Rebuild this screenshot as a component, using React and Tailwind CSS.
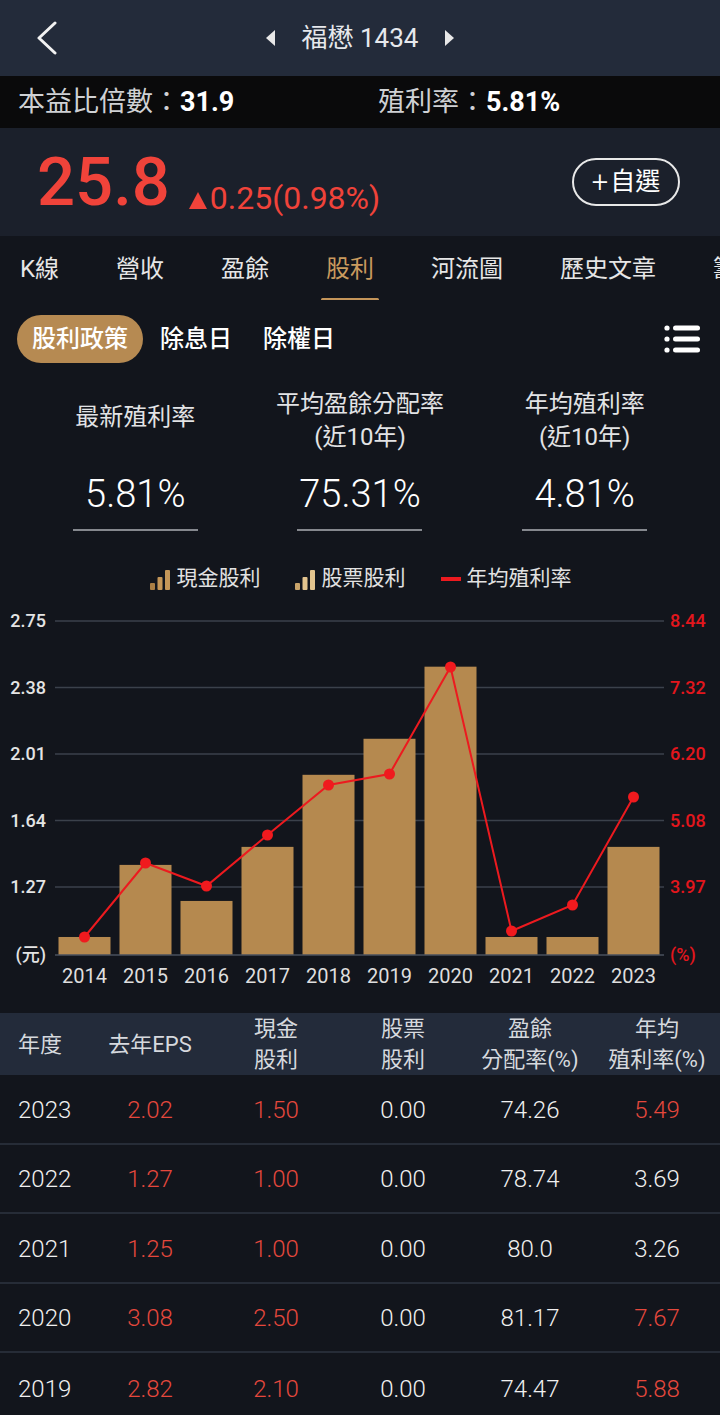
import React from 'react';

const FONT = { fontFamily: 'Roboto, "Noto Sans CJK TC", sans-serif' };

const tabs = ['K線', '營收', '盈餘', '股利', '河流圖', '歷史文章', '籌碼分析'];

const stats = [
  { label: ['最新殖利率'], value: '5.81%' },
  { label: ['平均盈餘分配率', '(近10年)'], value: '75.31%' },
  { label: ['年均殖利率', '(近10年)'], value: '4.81%' },
];

// chart data (pixel y is relative to the svg top)
const years = [2014, 2015, 2016, 2017, 2018, 2019, 2020, 2021, 2022, 2023];
const cash = [1.0, 1.4, 1.2, 1.5, 1.9, 2.1, 2.5, 1.0, 1.0, 1.5];
const lineY = [343, 269, 292, 241, 191, 180, 73, 337, 311, 203];
const grid = [
  { y: 27, l: '2.75', r: '8.44' },
  { y: 93.5, l: '2.38', r: '7.32' },
  { y: 160, l: '2.01', r: '6.20' },
  { y: 226.5, l: '1.64', r: '5.08' },
  { y: 293, l: '1.27', r: '3.97' },
];

const rows = [
  ['2023', '2.02', '1.50', '0.00', '74.26', '5.49', true],
  ['2022', '1.27', '1.00', '0.00', '78.74', '3.69', false],
  ['2021', '1.25', '1.00', '0.00', '80.0', '3.26', false],
  ['2020', '3.08', '2.50', '0.00', '81.17', '7.67', true],
  ['2019', '2.82', '2.10', '0.00', '74.47', '5.88', true],
];

const COLS = 'grid-cols-[96px_108px_144px_110px_144px_110px]';

function BarsIcon({ light }) {
  const c1 = light ? '#c9a46a' : '#a97e45';
  const c2 = light ? '#e3c48e' : '#c49658';
  return (
    <svg width="22" height="22" viewBox="0 0 22 22">
      <rect x="1" y="15" width="5" height="7" rx="1" fill={c1} />
      <rect x="8.5" y="9" width="5" height="13" rx="1" fill={c2} />
      <rect x="16" y="2" width="5" height="20" rx="1" fill={c2} />
    </svg>
  );
}

function Chart() {
  const base = 361;
  const barY = (v) => base - (v - 0.9) * 180.2;
  const cx = (i) => 84.5 + 61 * i;
  return (
    <svg width="720" height="419" viewBox="0 0 720 419" className="block">
      {grid.map((g) => (
        <g key={g.l}>
          <line x1="55" x2="664" y1={g.y} y2={g.y} stroke="#3b414b" strokeWidth="1.5" />
          <text x="46" y={g.y + 6} textAnchor="end" fontSize="18" fontWeight="500" fill="#e4e4e4" style={FONT}>{g.l}</text>
          <text x="670" y={g.y + 6} fontSize="18" fontWeight="500" fill="#e3161c" style={FONT}>{g.r}</text>
        </g>
      ))}
      {cash.map((v, i) => (
        <rect key={i} x={cx(i) - 26} y={barY(v)} width="52" height={base - barY(v)} fill="#b5894f" />
      ))}
      <line x1="55" x2="664" y1={base} y2={base} stroke="#4a505c" strokeWidth="1.5" />
      <text x="46" y={base + 6} textAnchor="end" fontSize="18" fontWeight="500" fill="#e4e4e4" style={FONT}>(元)</text>
      <text x="670" y={base + 6} fontSize="18" fontWeight="500" fill="#e3161c" style={FONT}>(%)</text>
      <polyline
        points={lineY.map((y, i) => `${cx(i)},${y}`).join(' ')}
        fill="none"
        stroke="#ec1a1f"
        strokeWidth="2"
      />
      {lineY.map((y, i) => (
        <circle key={i} cx={cx(i)} cy={y} r="5.5" fill="#f01a1e" />
      ))}
      {years.map((yr, i) => (
        <text key={yr} x={cx(i)} y="389" textAnchor="middle" fontSize="20" fill="#dedede" style={FONT}>{yr}</text>
      ))}
    </svg>
  );
}

export default function App() {
  return (
    <div className="w-[720px] min-h-[1415px] bg-[#12151c] text-[#e8e8e8] overflow-hidden" style={FONT}>
      {/* Header */}
      <div className="relative h-[76px] bg-[#232b3a] flex items-center justify-center">
        <svg className="absolute left-[34px] top-[21px]" width="26" height="34" viewBox="0 0 26 34">
          <path d="M21 2 L5 17 L21 32" fill="none" stroke="#f2f2f2" strokeWidth="3" strokeLinecap="round" strokeLinejoin="round" />
        </svg>
        <div className="flex items-center gap-[26px]">
          <svg width="12" height="18" viewBox="0 0 12 18"><path d="M11 1 L2 9 L11 17 Z" fill="#e8e8e8" /></svg>
          <span className="text-[26px] text-[#e6e8ec]">福懋 1434</span>
          <svg width="12" height="18" viewBox="0 0 12 18"><path d="M1 1 L10 9 L1 17 Z" fill="#e8e8e8" /></svg>
        </div>
      </div>

      {/* PE / yield bar */}
      <div className="h-[52px] bg-[#0a0a0b] flex items-center pl-[18px] text-[27px]">
        <div className="w-[360px] text-[#cfd1d4]">
          本益比倍數：<span className="text-white font-bold">31.9</span>
        </div>
        <div className="text-[#cfd1d4]">
          殖利率：<span className="text-white font-bold">5.81%</span>
        </div>
      </div>

      {/* Price */}
      <div className="h-[108px] bg-[#1b202b] flex items-center justify-between pl-[37px] pr-[40px]">
        <div className="flex items-end text-[#f0433a]">
          <span className="text-[67px] leading-none font-medium">25.8</span>
          <span className="text-[32px] leading-none ml-[18px] mb-[2px] flex items-end">
            <svg width="20" height="20" viewBox="0 0 20 20" className="mb-[4px] mr-[2px]"><path d="M10 2 L19 19 L1 19 Z" fill="#f0433a" /></svg>
            0.25(0.98%)
          </span>
        </div>
        <div className="w-[108px] h-[48px] rounded-full border-2 border-[#e8e8e8] flex items-center justify-center text-[25px] text-white">
          <span className="text-[29px] font-light mr-[2px] leading-none">+</span>自選
        </div>
      </div>

      {/* Tabs */}
      <div className="h-[64px] flex items-stretch gap-[57px] pl-[20px] whitespace-nowrap overflow-hidden text-[24px]">
        {tabs.map((t) => (
          <div key={t} className={`relative flex items-center pt-[2px] ${t === '股利' ? 'text-[#c99a5e]' : 'text-[#e6e6e6]'}`}>
            {t}
            {t === '股利' && <div className="absolute left-[-5px] right-[-5px] bottom-[-1px] h-[3px] bg-[#c4955a] rounded-full" />}
          </div>
        ))}
      </div>

      {/* Sub tabs */}
      <div className="mt-[15px] h-[48px] flex items-center pl-[17px] pr-[20px] text-[24px]">
        <div className="h-[48px] px-[15px] rounded-full bg-[#b68a52] flex items-center text-white font-medium">股利政策</div>
        <div className="ml-[17px] text-white font-medium">除息日</div>
        <div className="ml-[31px] text-white font-medium">除權日</div>
        <svg className="ml-auto" width="36" height="28" viewBox="0 0 36 28">
          <circle cx="3" cy="3" r="2.6" fill="#fff" />
          <circle cx="3" cy="14" r="2.6" fill="#fff" />
          <circle cx="3" cy="25" r="2.6" fill="#fff" />
          <rect x="9" y="0.5" width="27" height="5" rx="2.5" fill="#fff" />
          <rect x="9" y="11.5" width="27" height="5" rx="2.5" fill="#fff" />
          <rect x="9" y="22.5" width="27" height="5" rx="2.5" fill="#fff" />
        </svg>
      </div>

      {/* Summary stats */}
      <div className="mt-[25px] grid grid-cols-3 px-[23px]">
        {stats.map((s) => (
          <div key={s.value} className="flex flex-col items-center">
            <div className={`h-[66px] flex flex-col items-center justify-center text-[24px] leading-[33px] text-[#e2e3e5] ${s.label.length === 1 ? 'pb-[8px]' : ''}`}>
              {s.label.map((l) => <div key={l}>{l}</div>)}
            </div>
            <div className="mt-[17px] h-[46px] flex items-center text-[38px] font-light text-white">{s.value}</div>
            <div className="mt-[12px] w-[125px] h-[2px] bg-[#85888e]" />
          </div>
        ))}
      </div>

      {/* Legend */}
      <div className="mt-[33px] h-[30px] flex items-center justify-center text-[21px] text-[#e2e2e2]">
        <BarsIcon />
        <span className="ml-[6px]">現金股利</span>
        <span className="ml-[33px]"><BarsIcon light /></span>
        <span className="ml-[6px]">股票股利</span>
        <span className="ml-[35px] w-[20px] h-[4px] bg-[#ec1a1f]" />
        <span className="ml-[6px]">年均殖利率</span>
      </div>

      <Chart />

      {/* Table */}
      <div className={`h-[62px] bg-[#232b3a] grid ${COLS} items-center text-[22px] leading-[31px] text-[#d6d9de]`}>
        <div className="pl-[18px]">年度</div>
        <div className="text-center">去年EPS</div>
        <div className="text-center">現金<br />股利</div>
        <div className="text-center">股票<br />股利</div>
        <div className="text-center">盈餘<br />分配率(%)</div>
        <div className="text-center">年均<br />殖利率(%)</div>
      </div>
      {rows.map((r, i) => (
        <div
          key={r[0]}
          className={`h-[69.5px] grid ${COLS} items-center text-[24px] font-light pt-[2px] ${i < rows.length - 1 ? 'border-b-2 border-[#262c37]' : ''}`}
        >
          <div className="pl-[18px] text-[#f0f0f0]">{r[0]}</div>
          <div className="text-center text-[#e5483c]">{r[1]}</div>
          <div className="text-center text-[#e5483c]">{r[2]}</div>
          <div className="text-center text-[#f0f0f0]">{r[3]}</div>
          <div className="text-center text-[#f0f0f0]">{r[4]}</div>
          <div className={`text-center ${r[6] ? 'text-[#e5483c]' : 'text-[#f0f0f0]'}`}>{r[5]}</div>
        </div>
      ))}
    </div>
  );
}
